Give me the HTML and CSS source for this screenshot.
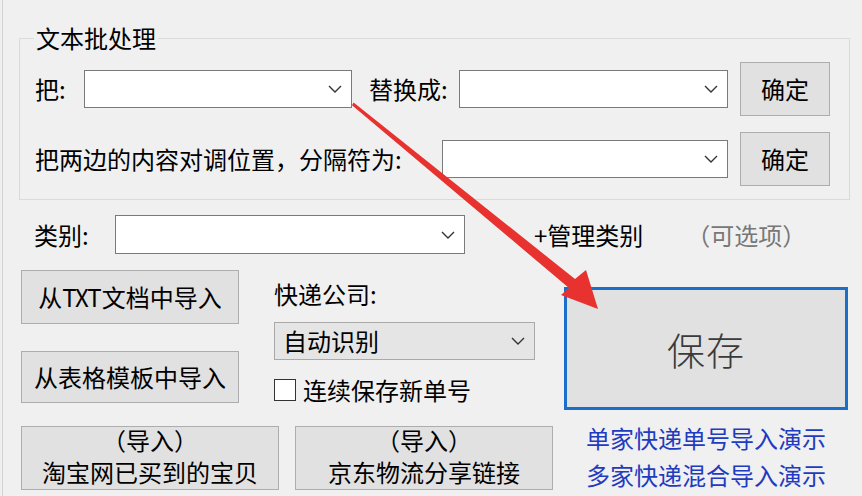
FILE: index.html
```html
<!DOCTYPE html>
<html lang="zh-CN">

<head>
    <meta charset="UTF-8">
    <meta name="viewport" content="width=device-width, initial-scale=1.0">
    <link rel="stylesheet" href="styles.css">
</head>

<body>
    <div class="window">
        <fieldset class="batch">
            <legend>文本批处理</legend>
            <div class="row">
                <span class="lbl lbl-ba">把:</span>
                <div class="combo combo-a"><svg class="chev" viewBox="0 0 14 8"><path d="M1 1 L7 7 L13 1" /></svg></div>
                <span class="lbl lbl-replace">替换成:</span>
                <div class="combo combo-b"><svg class="chev" viewBox="0 0 14 8"><path d="M1 1 L7 7 L13 1" /></svg></div>
                <div class="btn btn-ok">确定</div>
            </div>
            <div class="row row-swap">
                <span class="lbl lbl-swap">把两边的内容对调位置，分隔符为:</span>
                <div class="combo combo-c"><svg class="chev" viewBox="0 0 14 8"><path d="M1 1 L7 7 L13 1" /></svg></div>
                <div class="btn btn-ok">确定</div>
            </div>
        </fieldset>

        <div class="cat-row">
            <span class="lbl lbl-cat">类别:</span>
            <div class="combo combo-cat"><svg class="chev" viewBox="0 0 14 8"><path d="M1 1 L7 7 L13 1" /></svg></div>
            <span class="manage">+管理类别</span>
            <span class="optional">（可选项）</span>
        </div>

        <div class="lower">
            <div class="lower-left">
                <div class="lower-top">
                    <div class="col-a">
                        <div class="btn btn-import">从<span class="txt">TXT</span>文档中导入</div>
                        <div class="btn btn-import btn-sheet">从表格模板中导入</div>
                    </div>
                    <div class="col-b">
                        <div class="courier-lbl">快递公司:</div>
                        <div class="combo combo-auto"><span>自动识别</span><svg class="chev" viewBox="0 0 14 8"><path d="M1 1 L7 7 L13 1" /></svg></div>
                        <label class="check-row"><span class="check"></span>连续保存新单号</label>
                    </div>
                </div>
                <div class="lower-bottom">
                    <div class="btn btn-two">
                        <span>（导入）</span>
                        <span>淘宝网已买到的宝贝</span>
                    </div>
                    <div class="btn btn-two btn-jd">
                        <span>（导入）</span>
                        <span>京东物流分享链接</span>
                    </div>
                </div>
            </div>
            <div class="lower-right">
                <div class="save">保存</div>
                <div class="links">
                    <a href="#">单家快递单号导入演示</a>
                    <a href="#">多家快递混合导入演示</a>
                </div>
            </div>
        </div>
    </div>

    <svg class="arrow" width="862" height="496" viewBox="0 0 862 496">
        <polygon points="353.6,102.6 575,279 586,270 598,309 561,295 569,288 352,105.2" />
    </svg>
</body>

</html>
```

FILE: styles.css
```css
body {
    margin: 0;
    width: 862px;
    height: 496px;
    overflow: hidden;
    background-color: #f0f0f0;
    font-family: "Noto Sans CJK SC", "Liberation Sans", sans-serif;
    font-size: 24px;
    color: #000;
    position: relative;
}

.window {
    margin-left: 2px;
    height: 496px;
    box-sizing: border-box;
    border-left: 1px solid #d2d2d2;
    padding-top: 26px;
}

.batch {
    margin: 0 0 0 16px;
    padding: 0 0 13px 0;
    width: 831px;
    box-sizing: border-box;
    border: 1px solid #dadada;
    min-width: 0;
}

.batch legend {
    margin-left: 14px;
    padding: 0 2px;
    line-height: 24px;
}

.row {
    display: flex;
    align-items: center;
    height: 54px;
    margin-top: 12px;
    padding-left: 15px;
}

.row-swap {
    margin-top: 16px;
}

.lbl {
    line-height: 24px;
    white-space: nowrap;
}

.lbl-ba {
    width: 49px;
}

.lbl-replace {
    width: 90px;
    margin-left: 17px;
}

.lbl-swap {
    width: 407px;
}

.combo {
    height: 38px;
    box-sizing: border-box;
    border: 1px solid #7a7a7a;
    background-color: #fff;
    display: flex;
    align-items: center;
    justify-content: flex-end;
    padding-right: 9px;
}

.chev {
    width: 14px;
    height: 8px;
    fill: none;
    stroke: #333;
    stroke-width: 1.4;
}

.combo-a {
    width: 268px;
}

.combo-b {
    width: 269px;
}

.combo-c {
    width: 286px;
}

.btn {
    box-sizing: border-box;
    border: 1px solid #adadad;
    background-color: #e1e1e1;
    display: flex;
    align-items: center;
    justify-content: center;
    line-height: 24px;
    white-space: nowrap;
}

.btn-ok {
    width: 90px;
    height: 54px;
    margin-left: 12px;
}

.cat-row {
    display: flex;
    align-items: center;
    height: 39px;
    margin-top: 15px;
    margin-left: 31px;
}

.lbl-cat {
    width: 81px;
}

.combo-cat {
    width: 350px;
    height: 39px;
}

.manage {
    margin-left: 69px;
    line-height: 24px;
}

.optional {
    margin-left: 43px;
    color: #777;
    line-height: 24px;
}

.lower {
    display: flex;
    margin-top: 16px;
}

.lower-left {
    margin-left: 18px;
    width: 532px;
}

.lower-top {
    display: flex;
    height: 133px;
}

.col-a {
    width: 218px;
    display: flex;
    flex-direction: column;
}

.btn-import {
    height: 54px;
}

.btn-sheet {
    height: 52px;
    margin-top: 27px;
}

.txt {
    letter-spacing: -1px;
    margin-right: 1px;
}

.col-b {
    margin-left: 35px;
    width: 261px;
    padding-top: 12px;
}

.courier-lbl {
    line-height: 24px;
}

.combo-auto {
    margin-top: 16px;
    border-color: #a9a9a9;
    background-color: #e5e5e5;
    justify-content: space-between;
    padding-left: 8px;
}

.combo-auto span {
    line-height: 24px;
}

.check-row {
    display: flex;
    align-items: center;
    margin-top: 19px;
    height: 22px;
    line-height: 24px;
}

.check {
    width: 22px;
    height: 22px;
    box-sizing: border-box;
    border: 1px solid #333;
    background-color: #fff;
    margin-right: 7px;
}

.lower-bottom {
    display: flex;
    margin-top: 23px;
}

.btn-two {
    width: 258px;
    height: 64px;
    flex-direction: column;
    line-height: 32px;
    padding-bottom: 5px;
}

.btn-jd {
    margin-left: 16px;
}

.lower-right {
    margin-left: 11px;
    width: 284px;
}

.save {
    margin-top: 17px;
    height: 123px;
    box-sizing: border-box;
    border: 3px solid #1c6fc9;
    background-color: #e1e1e1;
    display: flex;
    align-items: center;
    justify-content: center;
    font-size: 38px;
    font-weight: 300;
    color: #3a3a3a;
    letter-spacing: 1px;
}

.links {
    margin-top: 9px;
    display: flex;
    flex-direction: column;
    align-items: center;
    line-height: 37px;
}

.links a {
    color: #1f3cc0;
    text-decoration: none;
}

.arrow {
    position: absolute;
    top: 0;
    left: 0;
    pointer-events: none;
}

.arrow polygon {
    fill: #e8322f;
}
```
